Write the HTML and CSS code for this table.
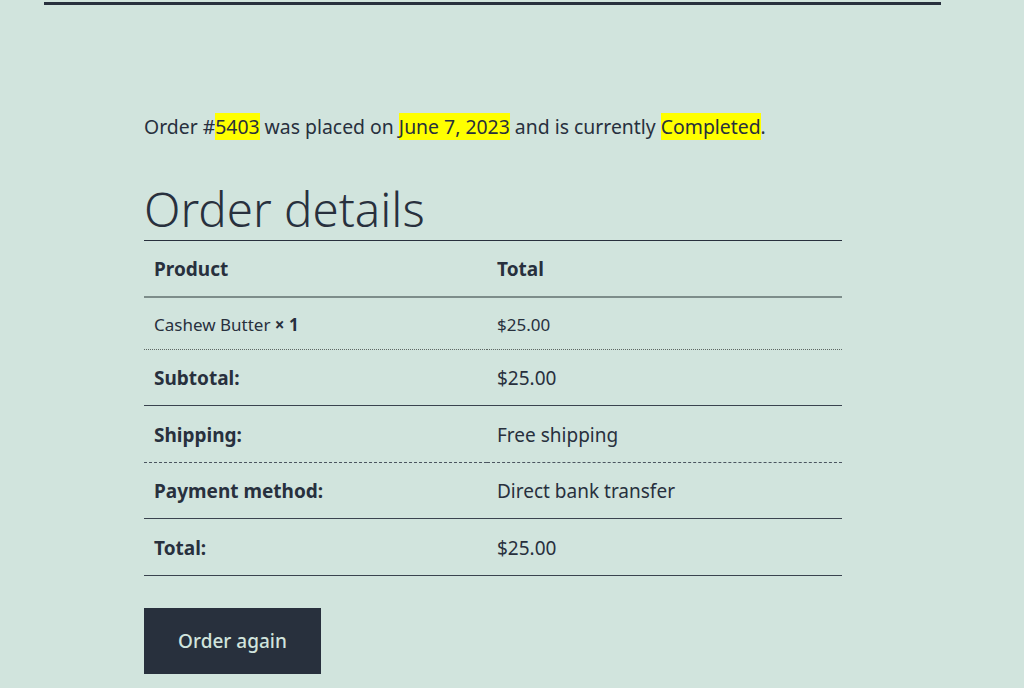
FILE: index.html
```html
<!DOCTYPE html>
<html lang="en">
<head>
    <meta charset="UTF-8">
    <meta name="viewport" content="width=device-width, initial-scale=1.0">
    <title>Order #5403</title>
    <link rel="stylesheet" href="styles.css">
</head>
<body>
    <div class="top-rule"></div>
    <main class="order">
        <p class="order-status">Order #<mark>5403</mark> was placed on <mark>June 7, 2023</mark> and is currently <mark>Completed</mark>.</p>

        <h2 class="order-title">Order details</h2>
        <table class="order-table">
            <colgroup>
                <col class="col-label">
                <col>
            </colgroup>
            <thead>
                <tr>
                    <th>Product</th>
                    <th>Total</th>
                </tr>
            </thead>
            <tbody>
                <tr class="item">
                    <td>Cashew Butter <strong>× 1</strong></td>
                    <td>$25.00</td>
                </tr>
            </tbody>
            <tfoot>
                <tr>
                    <th>Subtotal:</th>
                    <td>$25.00</td>
                </tr>
                <tr class="dotted tall">
                    <th>Shipping:</th>
                    <td>Free shipping</td>
                </tr>
                <tr>
                    <th>Payment method:</th>
                    <td>Direct bank transfer</td>
                </tr>
                <tr class="tall">
                    <th>Total:</th>
                    <td>$25.00</td>
                </tr>
            </tfoot>
        </table>

        <button class="order-again">Order again</button>
    </main>
</body>
</html>
```

FILE: styles.css
```css
body {
    margin: 0;
    background-color: #d1e4dd;
    color: #28303d;
    font-family: "Noto Sans", "Open Sans", sans-serif;
}

.top-rule {
    width: 897px;
    margin-left: 44px;
    border-top: 3px solid #28303d;
    margin-top: 2px;
}

.order {
    width: 698px;
    margin-left: 144px;
    padding-top: 109px;
}

.order-status {
    margin: 0;
    font-size: 19.4px;
    line-height: 26px;
}

.order-status mark {
    background-color: #ffff00;
    color: #28303d;
}

.order-title {
    margin: 45px 0 0;
    font-size: 47.5px;
    font-weight: 300;
    line-height: 1;
    padding-bottom: 7px;
}

.order-table {
    width: 100%;
    table-layout: fixed;
    border-collapse: collapse;
    border-top: 1px solid #28303d;
    font-size: 19px;
}

.order-table .col-label {
    width: 343px;
}

.order-table th,
.order-table td {
    text-align: left;
    padding: 2px 10px 0;
    height: 53px;
    border-bottom: 1px solid #3a434f;
}

.order-table th {
    font-weight: 700;
}

.order-table thead th {
    height: 53px;
    border-bottom: 2px solid #7d8d8a;
}

.order-table .item td {
    font-size: 17px;
    height: 49px;
    border-bottom: 1px dotted #5d6763;
}

.order-table .tall th,
.order-table .tall td {
    height: 54px;
}

.order-table .dotted th,
.order-table .dotted td {
    border-bottom: 1px dashed #4b5560;
}

.order-again {
    margin-top: 32px;
    width: 177px;
    height: 66px;
    border: none;
    background-color: #28303d;
    color: #d1e4dd;
    font-family: inherit;
    font-size: 19px;
    font-weight: 500;
    cursor: pointer;
}
```
